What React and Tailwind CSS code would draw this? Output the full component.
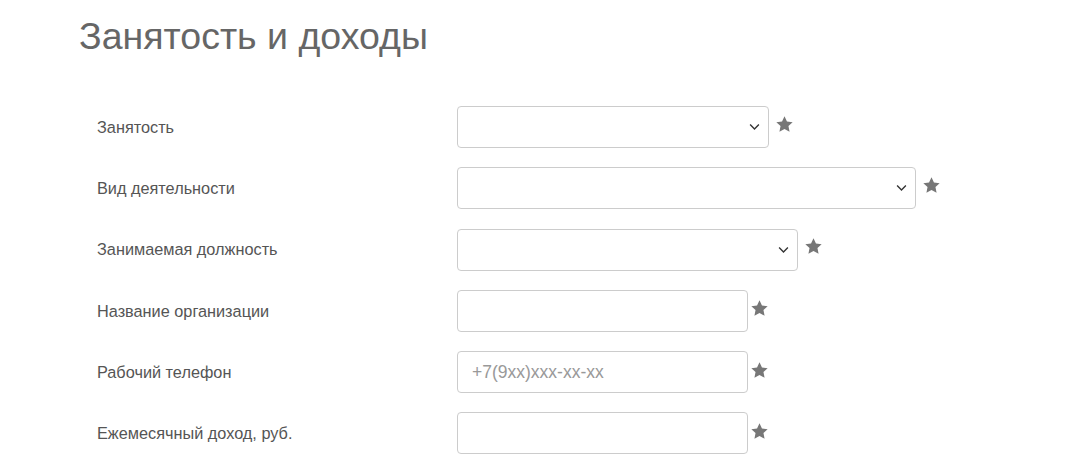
const rows = [
  { label: "Занятость", type: "select", w: "w-[312px]" },
  { label: "Вид деятельности", type: "select", w: "w-[459px]" },
  { label: "Занимаемая должность", type: "select", w: "w-[341px]" },
  { label: "Название организации", type: "input", w: "w-[291px]" },
  { label: "Рабочий телефон", type: "input", w: "w-[291px]", placeholder: "+7(9xx)xxx-xx-xx" },
  { label: "Ежемесячный доход, руб.", type: "input", w: "w-[291px]" },
];

const Star = ({ select }) => (
  <svg
    viewBox="0 0 24 24"
    className={`w-[19px] h-[19px] fill-[#777] ${select ? "ml-[6px] -mt-[6px]" : "ml-[2px] -mt-[4px]"}`}
  >
    <path d="M12 1.5l3.1 6.6 7.2.9-5.3 5 1.4 7.1L12 17.6l-6.4 3.5 1.4-7.1-5.3-5 7.2-.9z" />
  </svg>
);

const Chevron = () => (
  <svg viewBox="0 0 12 8" className="absolute right-[8px] top-1/2 -translate-y-1/2 w-[11px] h-[7px]" fill="none" stroke="#333" strokeWidth="1.6">
    <path d="M1 1.2l5 5 5-5" />
  </svg>
);

export default function App() {
  return (
    <div className="w-[1088px] h-[466px] bg-white font-['Liberation_Sans',Arial,sans-serif] overflow-hidden">
      <h1 className="pl-[79px] pt-[14px] text-[37.5px] leading-[44px] text-[#666]">Занятость и доходы</h1>
      <div className="pl-[97px] pt-[48px] flex flex-col gap-[19.25px]">
        {rows.map((r) => (
          <div key={r.label} className="flex items-center">
            <div className="w-[360px] text-[16.3px] text-[#555]">{r.label}</div>
            <div className={`relative h-[42px] ${r.w} border border-[#ccc] rounded-[4px] bg-white`}>
              {r.placeholder && (
                <span className="absolute left-[14px] top-1/2 -translate-y-1/2 text-[17.5px] text-[#999]">{r.placeholder}</span>
              )}
              {r.type === "select" && <Chevron />}
            </div>
            <Star select={r.type === "select"} />
          </div>
        ))}
      </div>
    </div>
  );
}
